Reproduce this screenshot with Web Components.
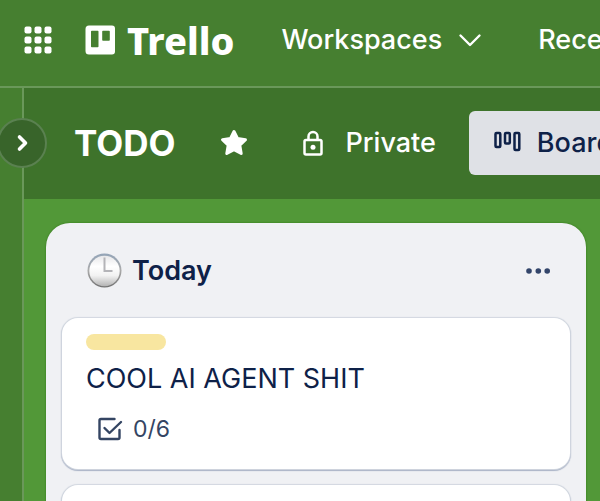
<!DOCTYPE html>
<html lang="en">
<head>
<meta charset="utf-8">
<title>TODO | Trello</title>
<style>
  html, body { height: 100%; margin: 0; }
  body { overflow: hidden; font-family: Inter, "Liberation Sans", sans-serif; background: #529838; color: #0e2148; }
</style>
</head>
<body>
<trello-app>
  <top-nav slot="nav">
    <nav-menu>Workspaces</nav-menu>
    <nav-menu>Recent</nav-menu>
  </top-nav>
  <side-rail slot="rail"></side-rail>
  <board-bar slot="bar" visibility="Private" view="Board">TODO</board-bar>
  <board-list>
    <span slot="title">Today</span>
    <board-card progress="0/6" label="Yellow">COOL AI AGENT SHIT</board-card>
    <board-card></board-card>
  </board-list>
</trello-app>

<script>
const base = `<style>
  :host, * { box-sizing: border-box; }
  button, a { font: inherit; color: inherit; text-decoration: none; background: none; border: 0; padding: 0; margin: 0; cursor: pointer; }
  button, a { display: flex; align-items: center; flex: none; white-space: nowrap; }
  h1, h2, p { margin: 0; }
  svg { display: block; flex: none; }
</style>`;

function define(name, html, setup) {
  customElements.define(name, class extends HTMLElement {
    constructor() {
      super();
      this.attachShadow({ mode: 'open' }).innerHTML = base + html;
    }
    connectedCallback() { if (setup) setup(this, this.shadowRoot); }
  });
}

define('trello-app', `<style>
  :host { display: flex; flex-direction: column; height: 100vh; overflow: hidden; }
  .body { display: flex; flex: 1; min-height: 0; }
  main { flex: 1; min-width: 0; display: flex; flex-direction: column; background: #529838; }
  .lists { flex: 1; min-height: 0; overflow: hidden; padding: 24px 14px 0 22px; }
</style>
<slot name="nav"></slot>
<div class="body">
  <slot name="rail"></slot>
  <main><slot name="bar"></slot><div class="lists"><slot></slot></div></main>
</div>`);

define('top-nav', `<style>
  :host { display: block; background: #467f30; color: #fff; border-bottom: 2px solid #6a985a; }
  header { display: flex; align-items: center; height: 86px; padding: 0 24px 6px; overflow: hidden; }
  .logo { gap: 12px; margin: 0 47px 0 33px; font: 800 38px/52px "Noto Sans", sans-serif; }
  nav { display: flex; gap: 56px; }
</style>
<header>
  <button class="apps" aria-label="More from Atlassian">
    <svg width="28" height="28" viewBox="0 0 28 28" fill="#fff">
      <rect x="0.5" y="0.5" width="7" height="7" rx="2"/><rect x="10.5" y="0.5" width="7" height="7" rx="2"/><rect x="20.5" y="0.5" width="7" height="7" rx="2"/>
      <rect x="0.5" y="10.5" width="7" height="7" rx="2"/><rect x="10.5" y="10.5" width="7" height="7" rx="2"/><rect x="20.5" y="10.5" width="7" height="7" rx="2"/>
      <rect x="0.5" y="20.5" width="7" height="7" rx="2"/><rect x="10.5" y="20.5" width="7" height="7" rx="2"/><rect x="20.5" y="20.5" width="7" height="7" rx="2"/>
    </svg>
  </button>
  <a class="logo" href="#home">
    <svg width="30" height="30" viewBox="0 0 30 30" fill="#fff" fill-rule="evenodd">
      <path d="M4 .5H27A3 3 0 0 1 30 3.500V26.500A3 3 0 0 1 27 29.500H4A3.500 3.500 0 0 1 .5 26V4A3.500 3.500 0 0 1 4 .5ZM6 6.500V21.500Q6 22.300 6.800 22.300H12.700Q13.500 22.300 13.500 21.500V6.500Q13.500 5.700 12.700 5.700H6.800Q6 5.700 6 6.500ZM17.200 6.500V15Q17.200 15.800 18 15.800H24Q24.800 15.800 24.800 15V6.500Q24.800 5.700 24 5.700H18Q17.200 5.700 17.200 6.500Z"/>
    </svg>
    <span>Trello</span>
  </a>
  <nav><slot></slot></nav>
</header>`);

define('nav-menu', `<style>
  :host { display: block; }
  button { gap: 16px; font-size: 27px; font-weight: 500; line-height: 40px; }
</style>
<button aria-haspopup="true"><span><slot></slot></span>
  <svg width="24" height="24" viewBox="0 0 24 24" fill="none" stroke="#fff" stroke-width="2.4" stroke-linecap="round" stroke-linejoin="round"><path d="M2.500 7.500L12 17L21.500 7.500"/></svg>
</button>`);

define('side-rail', `<style>
  :host { display: block; flex: none; width: 24px; background: #467f30; border-right: 2px solid #6a985a; position: relative; z-index: 1; }
  button { position: absolute; top: 30px; left: -3px; width: 50px; height: 50px; justify-content: center; border-radius: 50%; background: #38642a; border: 2px solid #5a8150; }
</style>
<button aria-label="Expand sidebar">
  <svg width="16" height="20" viewBox="0 0 16 20" fill="none" stroke="#fff" stroke-width="3.6" stroke-linecap="round" stroke-linejoin="round"><path d="M5.500 4L11.500 10L5.500 16"/></svg>
</button>`);

define('board-bar', `<style>
  :host { display: block; background: #3e732b; color: #fff; }
  .bar { display: flex; align-items: center; height: 111px; padding: 0 0 1px 50px; overflow: hidden; font-size: 27px; font-weight: 500; line-height: 40px; }
  h1 { font-size: 35px; font-weight: 700; line-height: 44px; flex: none; }
  .star { margin: 0 52px 0 44px; }
  .private { gap: 20px; margin-right: 33px; }
  .view { gap: 16px; height: 64px; padding: 0 24px; border-radius: 6px; background: #dfe1e6; color: #0e2148; }
</style>
<div class="bar">
  <h1><slot></slot></h1>
  <button class="star" aria-label="Star board">
    <svg width="30" height="28" viewBox="0 0 30 28" fill="#fff" stroke="#fff" stroke-width="3" stroke-linejoin="round"><path d="M15 2.500L18.500 9.500L26.500 10.700L20.800 16.300L22.200 24.500L15 20.700L7.800 24.500L9.200 16.300L3.500 10.700L11.500 9.500Z"/></svg>
  </button>
  <button class="private">
    <svg width="24" height="28" viewBox="0 0 24 28" fill="none" stroke="#fff" stroke-width="2.5"><rect x="3.500" y="11" width="17" height="14.500" rx="1.500"/><path d="M7.500 11V7.500a4.500 4.500 0 0 1 9 0V11"/><circle cx="12" cy="18.200" r="2.500" fill="#fff" stroke="none"/></svg>
    <span id="vis"></span>
  </button>
  <button class="view">
    <svg width="28" height="24" viewBox="0 0 28 24" fill="none" stroke="#0e2148" stroke-width="2.5"><rect x="2.500" y="2" width="4.800" height="14" rx="1"/><rect x="12" y="2" width="4.800" height="10.500" rx="1"/><rect x="21.500" y="2" width="4.800" height="17" rx="1"/></svg>
    <span id="view"></span>
  </button>
</div>`, (el, root) => {
  root.getElementById('vis').textContent = el.getAttribute('visibility');
  root.getElementById('view').textContent = el.getAttribute('view');
});

define('board-list', `<style>
  :host { display: block; width: 540px; border-radius: 24px; background: #f0f1f4; box-shadow: 0 0 2px #2d7312; padding: 16px; }
  header { display: flex; align-items: center; height: 63px; margin-bottom: 16px; padding: 0 20px 0 24px; }
  h2 { flex: 1; display: flex; align-items: center; gap: 10px; font-size: 27px; font-weight: 600; line-height: 40px; }
  .cards { display: flex; flex-direction: column; gap: 16px; }
</style>
<header>
  <h2>
    <svg width="36" height="36" viewBox="0 0 36 36" role="img" aria-label="Three o'clock">
      <defs>
        <linearGradient id="rim" x1="0" y1="0" x2="0" y2="1"><stop offset="0" stop-color="#94a5b8"/><stop offset=".5" stop-color="#aaa"/><stop offset="1" stop-color="#707070"/></linearGradient>
        <linearGradient id="face" x1="0" y1="0" x2="0" y2="1"><stop offset="0" stop-color="#e8e8ea"/><stop offset=".35" stop-color="#fff"/><stop offset=".65" stop-color="#f2f2f2"/><stop offset="1" stop-color="#b4b4b4"/></linearGradient>
      </defs>
      <circle cx="18.500" cy="17.500" r="17" fill="url(#rim)"/>
      <circle cx="18.500" cy="18" r="15.200" fill="url(#face)"/>
      <path d="M18.500 4.500V18H26.500" fill="none" stroke="#b4b4b8" stroke-width="2"/>
    </svg>
    <slot name="title"></slot>
  </h2>
  <button aria-label="List actions">
    <svg width="24" height="8" viewBox="0 0 24 8" fill="#33456a"><circle cx="3" cy="4" r="2.8"/><circle cx="12.300" cy="4" r="2.800"/><circle cx="21.200" cy="4" r="2.800"/></svg>
  </button>
</header>
<div class="cards"><slot></slot></div>`);

define('board-card', `<style>
  :host { display: block; min-height: 151px; padding: 16px 24px; border-radius: 16px; background: #fff; box-shadow: 0 0 1px 1px #d3d8e0, 0 1px 1px 1px #a5afc4; }
  .label { width: 80px; height: 16px; border-radius: 8px; background: #f8e6a0; }
  .title { font-size: 27px; line-height: 40px; margin: 9px 0 14px; }
  .badge { display: flex; align-items: center; gap: 10px; padding-left: 11px; font-size: 23px; line-height: 32px; color: #344563; }
  [hidden] { display: none; }
</style>
<div id="content">
  <div class="label" role="img"></div>
  <p class="title"><slot></slot></p>
  <div class="badge">
    <svg width="26" height="24" viewBox="0 0 26 24" fill="none" stroke="#344563" stroke-width="2.4" stroke-linecap="round" stroke-linejoin="round"><path d="M17.500 2H4Q2.500 2 2.500 3.500V20.500Q2.500 22 4 22H21Q22.500 22 22.500 20.500V13"/><path d="M7.500 11L12.500 16L24 5"/></svg>
    <span id="progress"></span>
  </div>
</div>`, (el, root) => {
  const progress = el.getAttribute('progress');
  root.getElementById('content').hidden = !progress;
  root.getElementById('progress').textContent = progress || '';
  root.querySelector('.label').setAttribute('aria-label', el.getAttribute('label') || '');
});
</script>
</body>
</html>
